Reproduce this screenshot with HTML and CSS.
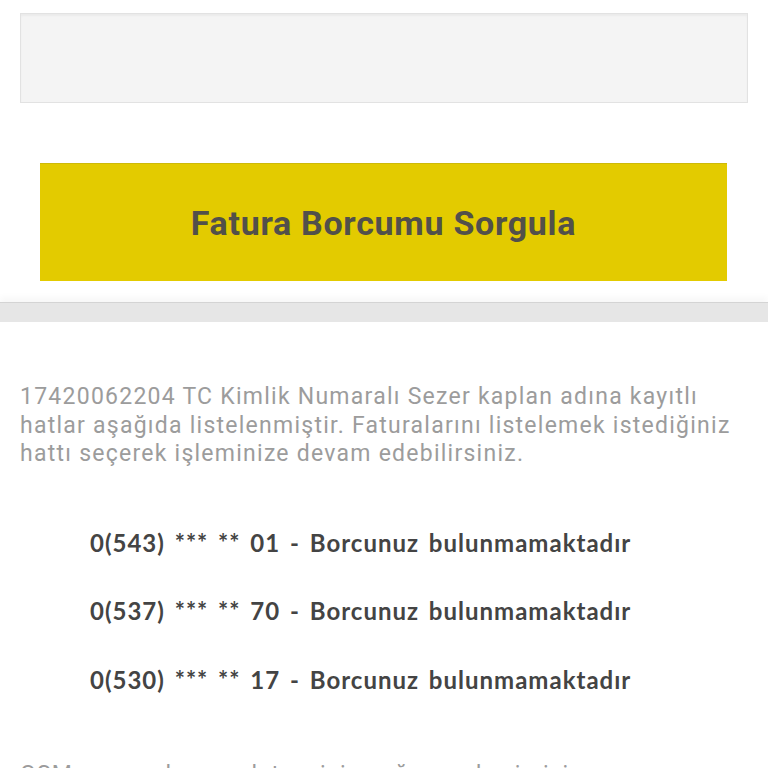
FILE: index.html
```html
<!DOCTYPE html>
<html lang="tr">
<head>
    <meta charset="UTF-8">
    <title>Fatura Sorgulama</title>
    <link rel="stylesheet" href="styles.css">
</head>
<body>
    <div class="search-box"></div>

    <div class="action">
        <a href="#" class="btn-query">Fatura Borcumu Sorgula</a>
    </div>

    <div class="divider"></div>

    <div class="content">
        <p class="info">17420062204 TC Kimlik Numaralı Sezer kaplan adına kayıtlı hatlar aşağıda listelenmiştir. Faturalarını listelemek istediğiniz hattı seçerek işleminize devam edebilirsiniz.</p>

        <ul class="line-list">
            <li><a href="#">0(543) *** ** 01 - Borcunuz bulunmamaktadır</a></li>
            <li><a href="#">0(537) *** ** 70 - Borcunuz bulunmamaktadır</a></li>
            <li><a href="#">0(530) *** ** 17 - Borcunuz bulunmamaktadır</a></li>
        </ul>

        <p class="info">GSM numaralarının detayı için çağrı merkezimizi<br/>arayabilirsiniz.</p>
    </div>
</body>
</html>
```

FILE: styles.css
```css
*{
    box-sizing:border-box;
}
body{
    margin:0;
    background:#fff;
    font-family:Roboto, "Liberation Sans", sans-serif;
}
    .search-box{
        margin:13px 20px 0;
        height:90px;
        background:#f4f4f4;
        border:1px solid #e2e2e2;
        box-shadow:inset 0 2px 2px rgba(0,0,0,0.04);
    }
    .action{
        margin:60px 41px 0 40px;
    }
    .btn-query{
        display:flex;
        align-items:center;
        justify-content:center;
        height:118px;
        background:#e3cb00;
        border-top:1px solid #cdb90a;
        color:#52504a;
        text-decoration:none;
        font-size:34px;
        font-weight:700;
        letter-spacing:0.7px;
    }
    .divider{
        margin-top:21px;
        height:20px;
        background:#e6e6e6;
        border-top:1px solid #d4d4d4;
        box-shadow:0 -5px 6px rgba(0,0,0,0.03);
    }
    .content{
        padding:61px 20px 0;
    }
    .info{
        margin:0;
        color:#9c9c9c;
        font-size:23px;
        font-weight:400;
        letter-spacing:1.25px;
        line-height:28.5px;
    }
    .line-list{
        list-style:none;
        margin:58px 0 29px;
        padding:0 0 0 70px;
    }
    .line-list li{
        height:68.5px;
        line-height:32px;
    }
    .line-list a{
        color:#444;
        text-decoration:none;
        font-family:Lato, "Noto Sans", sans-serif;
        font-size:24px;
        font-weight:700;
        letter-spacing:1px;
        word-spacing:3px;
    }
```
